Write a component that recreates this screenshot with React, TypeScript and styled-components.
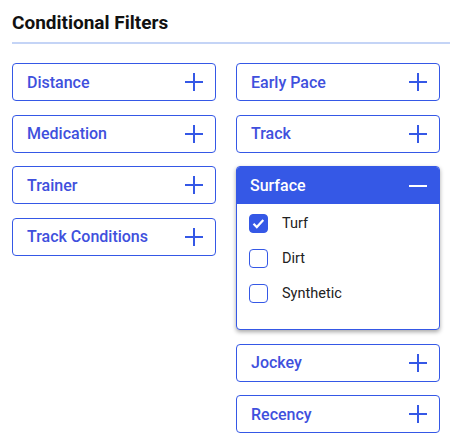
import React from 'react'
import styled, { createGlobalStyle } from 'styled-components'

const GlobalStyle = createGlobalStyle`
  * { box-sizing: border-box; }
  body {
    margin: 0;
    background: #ffffff;
    font-family: Roboto, "Liberation Sans", sans-serif;
  }
`

const BLUE = '#3558e6'

const Page = styled.div`
  padding: 11px 5px 0 12px;
  width: 455px;
`

const Title = styled.h2`
  margin: 0;
  font-size: 19px;
  line-height: 24px;
  font-weight: 700;
  color: #111111;
`

const Divider = styled.div`
  margin-top: 7px;
  height: 2px;
  background: #c4d4f6;
  width: 438px;
`

const Columns = styled.div`
  display: grid;
  grid-template-columns: 204px 204px;
  column-gap: 20px;
  margin-top: 19px;
  align-items: start;
`

const Column = styled.div`
  display: flex;
  flex-direction: column;
  gap: 13.5px;
`

const FilterButton = styled.button`
  display: flex;
  align-items: center;
  justify-content: space-between;
  width: 100%;
  height: 38px;
  padding: 0 12px 0 14px;
  border: 1px solid ${BLUE};
  border-radius: 4px;
  background: #ffffff;
  color: #4050dd;
  font-family: inherit;
  font-size: 16px;
  font-weight: 500;
  cursor: pointer;
`

const Panel = styled.div`
  border: 1px solid ${BLUE};
  border-radius: 4px;
  background: #ffffff;
  box-shadow: 0 2px 4px rgba(0, 0, 0, 0.35);
  overflow: hidden;
`

const PanelHeader = styled.div`
  display: flex;
  align-items: center;
  justify-content: space-between;
  height: 37px;
  padding: 0 12px 0 13px;
  background: ${BLUE};
  color: #ffffff;
  font-size: 16px;
  font-weight: 500;
`

const PanelBody = styled.div`
  display: flex;
  flex-direction: column;
  gap: 16px;
  padding: 10px 12px 26px 12px;
`

const Option = styled.label`
  display: flex;
  align-items: center;
  gap: 14px;
  height: 19px;
  font-size: 14.5px;
  color: #222222;
  cursor: pointer;
`

const Box = styled.span<{ $checked?: boolean }>`
  display: flex;
  align-items: center;
  justify-content: center;
  width: 19px;
  height: 19px;
  border-radius: 4px;
  border: 1.5px solid ${BLUE};
  background: ${p => (p.$checked ? BLUE : '#ffffff')};
`

const Plus = () => (
  <svg width="18" height="18" viewBox="0 0 18 18">
    <path d="M9 0v18M0 9h18" stroke={BLUE} strokeWidth="2" />
  </svg>
)

const Minus = () => (
  <svg width="18" height="18" viewBox="0 0 18 18">
    <path d="M0 9h18" stroke="#ffffff" strokeWidth="2" />
  </svg>
)

const Check = () => (
  <svg width="13" height="13" viewBox="0 0 13 13">
    <path d="M1.5 6.8l3.3 3.3 6.5-7" fill="none" stroke="#ffffff" strokeWidth="2.2" />
  </svg>
)

const left = ['Distance', 'Medication', 'Trainer', 'Track Conditions']
const options = [
  { label: 'Turf', checked: true },
  { label: 'Dirt', checked: false },
  { label: 'Synthetic', checked: false },
]

const Filter = ({ label }: { label: string }) => (
  <FilterButton>
    <span>{label}</span>
    <Plus />
  </FilterButton>
)

const App = () => (
  <>
    <GlobalStyle />
    <Page>
      <Title>Conditional Filters</Title>
      <Divider />
      <Columns>
        <Column>
          {left.map(l => (
            <Filter key={l} label={l} />
          ))}
        </Column>
        <Column>
          <Filter label="Early Pace" />
          <Filter label="Track" />
          <Panel>
            <PanelHeader>
              <span>Surface</span>
              <Minus />
            </PanelHeader>
            <PanelBody>
              {options.map(o => (
                <Option key={o.label}>
                  <Box $checked={o.checked}>{o.checked && <Check />}</Box>
                  {o.label}
                </Option>
              ))}
            </PanelBody>
          </Panel>
          <Filter label="Jockey" />
          <Filter label="Recency" />
        </Column>
      </Columns>
    </Page>
  </>
)

export default App
